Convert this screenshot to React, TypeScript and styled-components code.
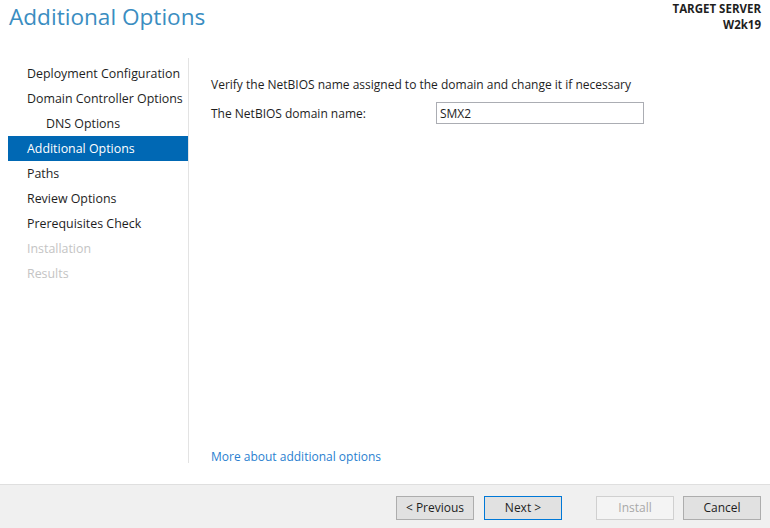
import React, { useState } from "react";
import styled, { createGlobalStyle } from "styled-components";

const GlobalStyle = createGlobalStyle`
  html, body {
    margin: 0;
    padding: 0;
    background: #ffffff;
  }
  body {
    font-family: "Open Sans", "Noto Sans", sans-serif;
    font-size: 12px;
    color: #1e1e1e;
  }
`;

const Window = styled.div`
  width: 770px;
  height: 528px;
  display: flex;
  flex-direction: column;
  background: #ffffff;
  overflow: hidden;
`;

const Header = styled.div`
  height: 58px;
  display: flex;
  justify-content: space-between;
  align-items: flex-start;
  padding: 0 9px 0 9px;
  box-sizing: border-box;
`;

const Title = styled.h1`
  margin: 2px 0 0 0;
  font-family: "Open Sans", "Noto Sans", sans-serif;
  font-weight: 400;
  font-size: 22.6px;
  line-height: 30px;
  color: #3a8dc1;
`;

const Server = styled.div`
  margin-top: 1px;
  text-align: right;
  font-weight: 700;
  font-size: 11.5px;
  line-height: 16px;
  color: #1e1e1e;
`;

const Body = styled.div`
  flex: 1;
  display: flex;
  min-height: 0;
`;

const Sidebar = styled.ul`
  list-style: none;
  margin: 0 0 21px 0;
  padding: 3px 0 0 8px;
  width: 180px;
  border-right: 1px solid #e3e3e3;
  font-size: 12.4px;
`;

const NavItem = styled.li<{ $active?: boolean; $disabled?: boolean; $indent?: boolean }>`
  height: 25px;
  line-height: 25px;
  padding-left: ${(p) => (p.$indent ? 38 : 19)}px;
  white-space: nowrap;
  background: ${(p) => (p.$active ? "#0068b4" : "transparent")};
  color: ${(p) => (p.$active ? "#ffffff" : p.$disabled ? "#c4c4c4" : "#1e1e1e")};
`;

const Content = styled.div`
  flex: 1;
  display: flex;
  flex-direction: column;
  padding: 18px 0 18px 22px;
`;

const Instruction = styled.p`
  margin: 0 0 8px 0;
  line-height: 18px;
`;

const FieldRow = styled.div`
  display: flex;
  align-items: center;
`;

const Label = styled.label`
  width: 225px;
`;

const TextInput = styled.input`
  width: 208px;
  height: 22px;
  box-sizing: border-box;
  border: 1px solid #abadb3;
  padding: 0 3px;
  font-family: "Open Sans", "Noto Sans", sans-serif;
  font-size: 12px;
  color: #1e1e1e;
  outline: none;
`;

const Spacer = styled.div`
  flex: 1;
`;

const Link = styled.a`
  color: #2a7fd0;
  text-decoration: none;
  line-height: 18px;
  cursor: pointer;
`;

const Footer = styled.div`
  height: 44px;
  background: #f0f0f0;
  border-top: 1px solid #dfdfdf;
  display: flex;
  align-items: center;
  justify-content: flex-end;
  padding: 2px 9px 0 0;
  box-sizing: border-box;
`;

const Button = styled.button<{ $primary?: boolean; $gap?: number }>`
  width: 78px;
  height: 24px;
  margin-left: ${(p) => p.$gap ?? 9}px;
  box-sizing: border-box;
  font-family: "Open Sans", "Noto Sans", sans-serif;
  font-size: 12px;
  color: #1e1e1e;
  background: #e1e1e1;
  border: 1px solid ${(p) => (p.$primary ? "#0078d7" : "#adadad")};
  padding: 0;
  cursor: pointer;

  &:disabled {
    background: #f4f4f4;
    border-color: #d0d0d0;
    color: #a8a8a8;
    cursor: default;
  }
`;

const steps = [
  { name: "Deployment Configuration" },
  { name: "Domain Controller Options" },
  { name: "DNS Options", indent: true },
  { name: "Additional Options", active: true },
  { name: "Paths" },
  { name: "Review Options" },
  { name: "Prerequisites Check" },
  { name: "Installation", disabled: true },
  { name: "Results", disabled: true },
];

const App: React.FC = () => {
  const [netbios, setNetbios] = useState("SMX2");

  return (
    <>
      <GlobalStyle />
      <Window>
        <Header>
          <Title>Additional Options</Title>
          <Server>
            TARGET SERVER
            <br />
            W2k19
          </Server>
        </Header>
        <Body>
          <Sidebar>
            {steps.map((s) => (
              <NavItem
                key={s.name}
                $active={s.active}
                $disabled={s.disabled}
                $indent={s.indent}
              >
                {s.name}
              </NavItem>
            ))}
          </Sidebar>
          <Content>
            <Instruction>
              Verify the NetBIOS name assigned to the domain and change it if necessary
            </Instruction>
            <FieldRow>
              <Label htmlFor="netbios">The NetBIOS domain name:</Label>
              <TextInput
                id="netbios"
                value={netbios}
                onChange={(e) => setNetbios(e.target.value)}
              />
            </FieldRow>
            <Spacer />
            <Link>More about additional options</Link>
          </Content>
        </Body>
        <Footer>
          <Button>&lt; Previous</Button>
          <Button $primary $gap={10}>Next &gt;</Button>
          <Button disabled $gap={34}>Install</Button>
          <Button>Cancel</Button>
        </Footer>
      </Window>
    </>
  );
};

export default App;
